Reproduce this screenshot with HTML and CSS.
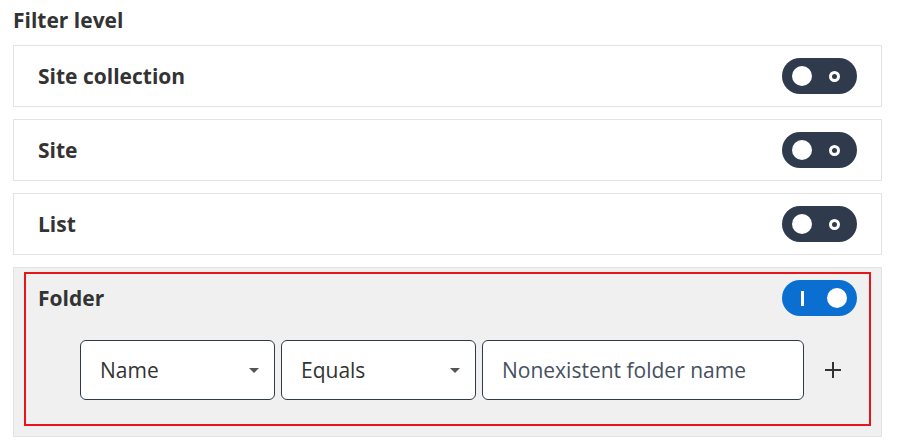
FILE: index.html
```html
<!DOCTYPE html>
<html lang="en">
<head>
<meta charset="utf-8">
<title>Filter level</title>
<link rel="stylesheet" href="styles.css">
</head>
<body>
<main class="panel">
  <h2 class="panel-title">Filter level</h2>
  <div class="levels">
    <section class="level">
      <div class="level-head">
        <span class="level-name">Site collection</span>
        <span class="toggle"><span class="knob"></span><span class="ring"></span></span>
      </div>
    </section>
    <section class="level">
      <div class="level-head">
        <span class="level-name">Site</span>
        <span class="toggle"><span class="knob"></span><span class="ring"></span></span>
      </div>
    </section>
    <section class="level">
      <div class="level-head">
        <span class="level-name">List</span>
        <span class="toggle"><span class="knob"></span><span class="ring"></span></span>
      </div>
    </section>
    <section class="level level-active">
      <div class="highlight">
        <div class="level-head level-head-active">
          <span class="level-name">Folder</span>
          <span class="toggle toggle-on"><span class="bar"></span><span class="knob"></span></span>
        </div>
        <div class="conditions">
          <div class="select">
            <span class="select-value">Name</span>
            <span class="caret"></span>
          </div>
          <div class="select">
            <span class="select-value">Equals</span>
            <span class="caret"></span>
          </div>
          <div class="text-input">Nonexistent folder name</div>
          <span class="add-btn" aria-label="Add">
            <svg width="18" height="18" viewBox="0 0 18 18"><path d="M9 1V17M1 9H17" stroke="#333" stroke-width="2" fill="none"/></svg>
          </span>
        </div>
      </div>
    </section>
  </div>
</main>
</body>
</html>
```

FILE: styles.css
```css
* { box-sizing: border-box; }

html, body {
  margin: 0;
  padding: 0;
  background: #ffffff;
}

body {
  font-family: "Open Sans", "Liberation Sans", sans-serif;
  color: #333333;
}

.panel {
  width: 869px;
  margin-left: 13px;
  padding-top: 8px;
}

.panel-title {
  margin: 0 0 13px 0;
  font-size: 21px;
  line-height: 24px;
  font-weight: 700;
  color: #333333;
}

.levels {
  display: flex;
  flex-direction: column;
  gap: 12px;
}

.level {
  border: 1px solid #e3e3e3;
  background: #ffffff;
}

.level-head {
  height: 60px;
  padding: 0 24px;
  display: flex;
  align-items: center;
  justify-content: space-between;
}

.level-name {
  font-size: 21px;
  font-weight: 700;
  color: #333333;
}

.toggle {
  width: 75px;
  height: 36px;
  border-radius: 18px;
  background: #2f3b4d;
  display: flex;
  align-items: center;
  justify-content: space-between;
  padding: 0 17px 0 10px;
}

.knob {
  width: 20px;
  height: 20px;
  border-radius: 50%;
  background: #ffffff;
}

.ring {
  width: 11px;
  height: 11px;
  border-radius: 50%;
  border: 3px solid #ffffff;
}

.toggle-on {
  background: #0a6fd0;
  padding: 0 10px 0 19px;
}

.bar {
  width: 3px;
  height: 15px;
  background: #ffffff;
}

.level-active {
  background: #f0f0f0;
  padding: 4px 10px 10px 10px;
}

.highlight {
  border: 2px solid #e8141c;
}

.level-head-active {
  height: 48px;
  padding: 0 12px;
}

.conditions {
  margin-top: 18px;
  padding: 0 0 24px 54px;
  display: flex;
  align-items: center;
  gap: 6px;
}

.select,
.text-input {
  height: 60px;
  border: 1px solid #2f3a4a;
  border-radius: 6px;
  background: #ffffff;
  font-size: 21px;
  display: flex;
  align-items: center;
}

.select {
  width: 195px;
  padding: 0 15px 0 19px;
  justify-content: space-between;
  color: #333333;
}

.caret {
  width: 0;
  height: 0;
  border-left: 5px solid transparent;
  border-right: 5px solid transparent;
  border-top: 5px solid #555555;
}

.text-input {
  width: 322px;
  padding: 0 19px;
  color: #46505f;
}

.add-btn {
  margin-left: 14px;
  display: flex;
  align-items: center;
  justify-content: center;
  width: 18px;
  height: 18px;
}
```
